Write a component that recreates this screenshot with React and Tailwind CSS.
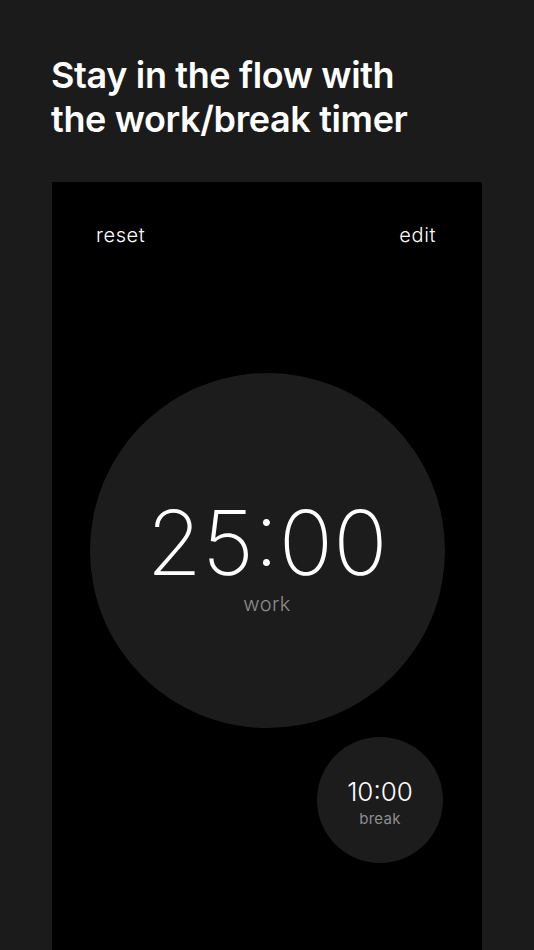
export default function App() {
  return (
    <div className="h-[950px] w-[534px] overflow-hidden bg-[#1b1b1b] flex flex-col font-['Inter','Liberation_Sans',sans-serif]">
      {/* Headline */}
      <h1 className="pt-[53px] pl-[51px] text-[36px] leading-[44px] font-semibold text-white tracking-[-0.01em]">
        Stay in the flow with
        <br />
        the work/break timer
      </h1>

      {/* Phone screen */}
      <div className="mt-[41px] mx-[52px] flex-1 bg-black flex flex-col">
        <div className="pt-[39px] pl-[44px] pr-[46px] flex justify-between text-[20px] leading-[28px] font-light tracking-[0.03em] text-white">
          <span>reset</span>
          <span>edit</span>
        </div>

        {/* Work timer */}
        <div className="mt-[124px] mx-auto w-[355px] h-[355px] rounded-full bg-[#1c1c1c] flex flex-col items-center pt-[125px]">
          <div className="text-[90px] leading-none font-extralight text-white">25:00</div>
          <div className="text-[20px] leading-[24px] font-light tracking-[0.02em] text-[#8e8e8e] mt-[4px]">work</div>
        </div>

        {/* Break timer */}
        <div className="self-end mr-[39px] mt-[9px] w-[126px] h-[126px] rounded-full bg-[#1c1c1c] flex flex-col items-center pt-[42px]">
          <div className="text-[26px] leading-none font-light text-white">10:00</div>
          <div className="text-[15px] leading-[18px] tracking-[0.02em] text-[#8e8e8e] mt-[5px]">break</div>
        </div>
      </div>
    </div>
  );
}
